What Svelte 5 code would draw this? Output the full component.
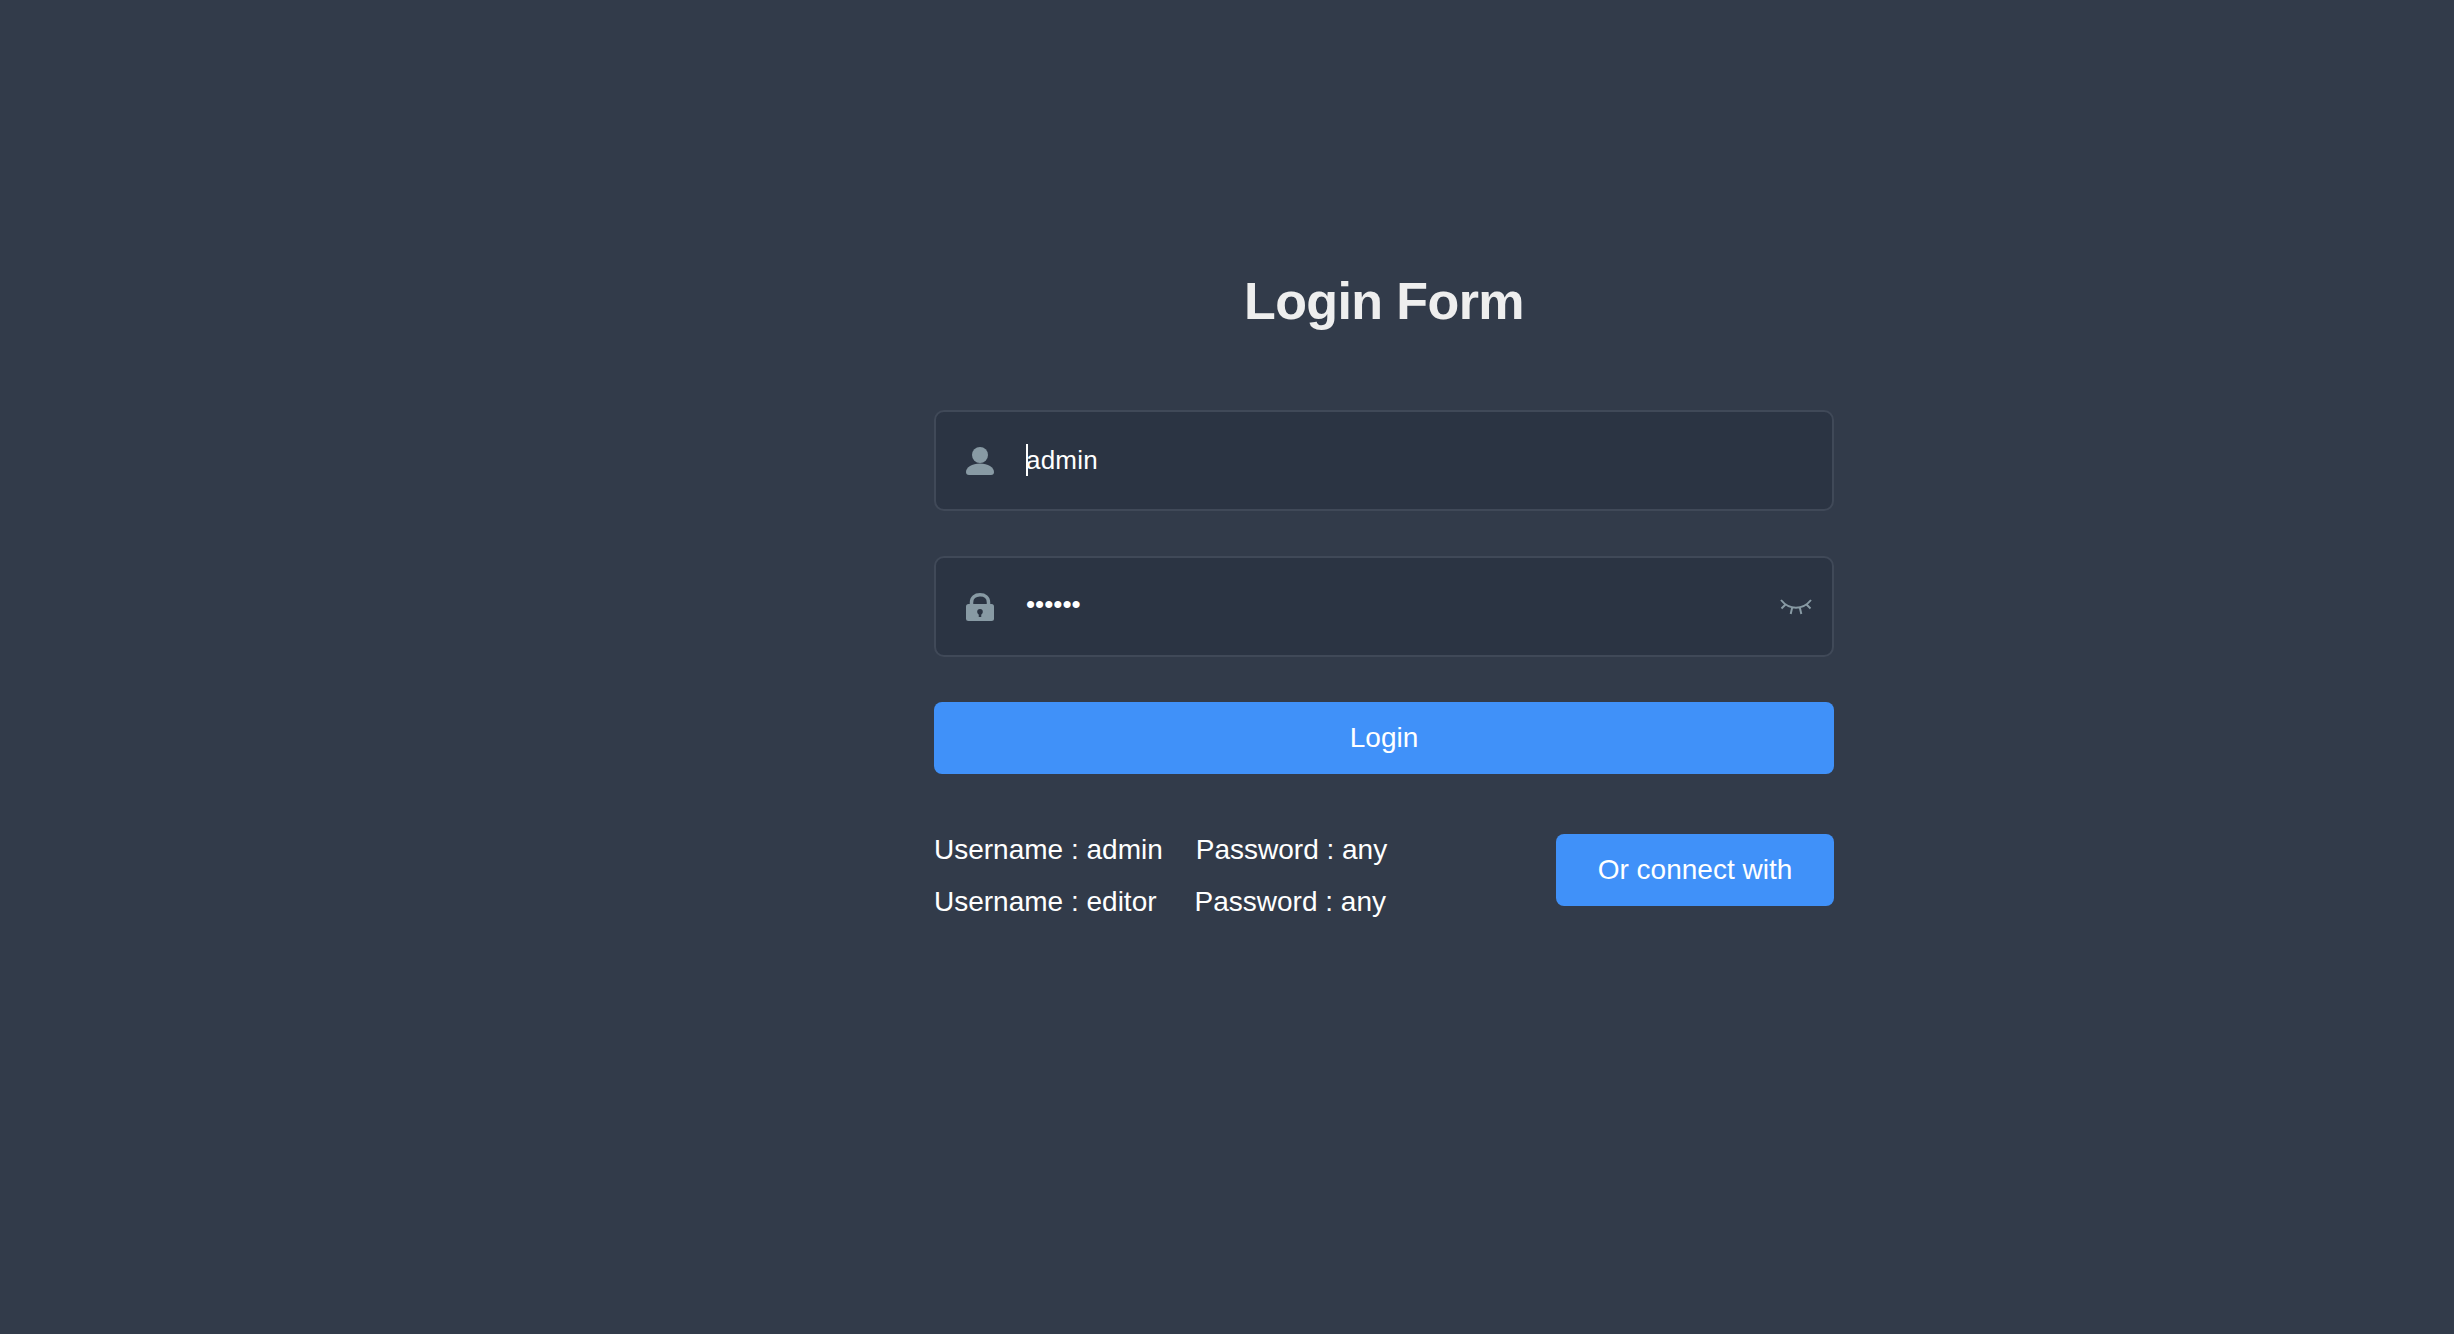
<script>
  let username = "admin";
  let password = "111111";
</script>

<div class="login-container">
  <form class="login-form">
    <h3 class="title">Login Form</h3>

    <div class="field">
      <span class="icon">
        <svg width="28" height="28" viewBox="0 0 28 28">
          <circle cx="14" cy="8" r="8" />
          <path d="M0 25c0-5 6-8.6 14-8.6S28 20 28 25c0 2-1 3-3 3H3c-2 0-3-1-3-3z" />
        </svg>
      </span>
      <input class="name-input" type="text" bind:value={username} />
      <span class="caret"></span>
    </div>

    <div class="field">
      <span class="icon">
        <svg width="28" height="28" viewBox="0 0 28 28">
          <path class="shackle" d="M5.5 12V9.5C5.5 4.5 9 1.8 14 1.8s8.500 2.700 8.500 7.700V12" />
          <rect y="11" width="28" height="17" rx="2.500" />
          <circle class="hole" cx="14" cy="18.700" r="2.800" />
          <path class="hole-stem" d="M14 19v5" />
        </svg>
      </span>
      <input class="pwd-input" type="password" bind:value={password} />
      <span class="show-pwd">
        <svg width="32" height="16" viewBox="0 0 32 16">
          <path d="M1 1c4 5 9 7.700 15 7.700S27 6 31 1M6 5l-4.500 4.500M12.300 8l-1.600 7M19.700 8l1.600 7M26 5l4.500 4.500" />
        </svg>
      </span>
    </div>

    <button type="button" class="btn login-btn">Login</button>

    <div class="bottom">
      <div class="tips">
        <div class="tip">
          <span class="first">Username : admin</span><span>Password : any</span>
        </div>
        <div class="tip">
          <span class="first wide">Username : editor</span><span>Password : any</span>
        </div>
      </div>
      <button type="button" class="btn connect-btn">Or connect with</button>
    </div>
  </form>
</div>

<style>
  :global(body) {
    margin: 0;
    background-color: #323b4a;
  }

  .login-container {
    min-height: 1334px;
    background-color: #323b4a;
    font-family: "Liberation Sans", Arial, sans-serif;
  }

  .login-form {
    width: 900px;
    margin-left: 934px;
    padding-top: 270px;
  }

  .title {
    margin: 0 0 78px;
    font-size: 52px;
    line-height: 62px;
    font-weight: 700;
    letter-spacing: -0.6px;
    color: #eee;
    text-align: center;
  }

  .field {
    position: relative;
    display: flex;
    align-items: center;
    box-sizing: border-box;
    height: 101px;
    margin-bottom: 45px;
    padding: 0 20px 0 30px;
    background-color: #2b3443;
    border: 2px solid #404958;
    border-radius: 10px;
  }

  .icon {
    display: flex;
    width: 28px;
    height: 28px;
    margin-right: 32px;
  }

  .icon svg {
    fill: #889aa4;
  }

  .shackle {
    fill: none;
    stroke: #889aa4;
    stroke-width: 3.5;
  }

  .hole {
    fill: #2b3443;
  }

  .hole-stem {
    fill: none;
    stroke: #2b3443;
    stroke-width: 2.500;
  }

  input {
    flex: 1;
    min-width: 0;
    box-sizing: border-box;
    height: 100%;
    padding: 0;
    border: none;
    outline: none;
    background: transparent;
    color: #fff;
    font-family: inherit;
    font-size: 26px;
  }

  .name-input {
    padding-bottom: 1px;
    letter-spacing: 0.2px;
  }

  .pwd-input {
    padding-bottom: 5px;
  }

  .caret {
    position: absolute;
    left: 90px;
    top: 32px;
    width: 2px;
    height: 32px;
    background-color: #fff;
  }

  .show-pwd {
    display: flex;
    width: 32px;
    height: 16px;
  }

  .show-pwd svg {
    fill: none;
    stroke: #889aa4;
    stroke-width: 2;
  }

  .btn {
    box-sizing: border-box;
    height: 72px;
    padding: 0;
    border: none;
    border-radius: 8px;
    background-color: #4091f9;
    color: #fff;
    font-family: inherit;
    font-size: 28px;
  }

  .login-btn {
    display: block;
    width: 100%;
    margin-bottom: 60px;
  }

  .bottom {
    display: flex;
    justify-content: space-between;
    align-items: flex-start;
  }

  .tip {
    height: 32px;
    margin-bottom: 20px;
    font-size: 28px;
    line-height: 32px;
    color: #fff;
  }

  .first {
    margin-right: 33px;
  }

  .first.wide {
    margin-right: 38px;
  }

  .connect-btn {
    width: 278px;
  }
</style>
